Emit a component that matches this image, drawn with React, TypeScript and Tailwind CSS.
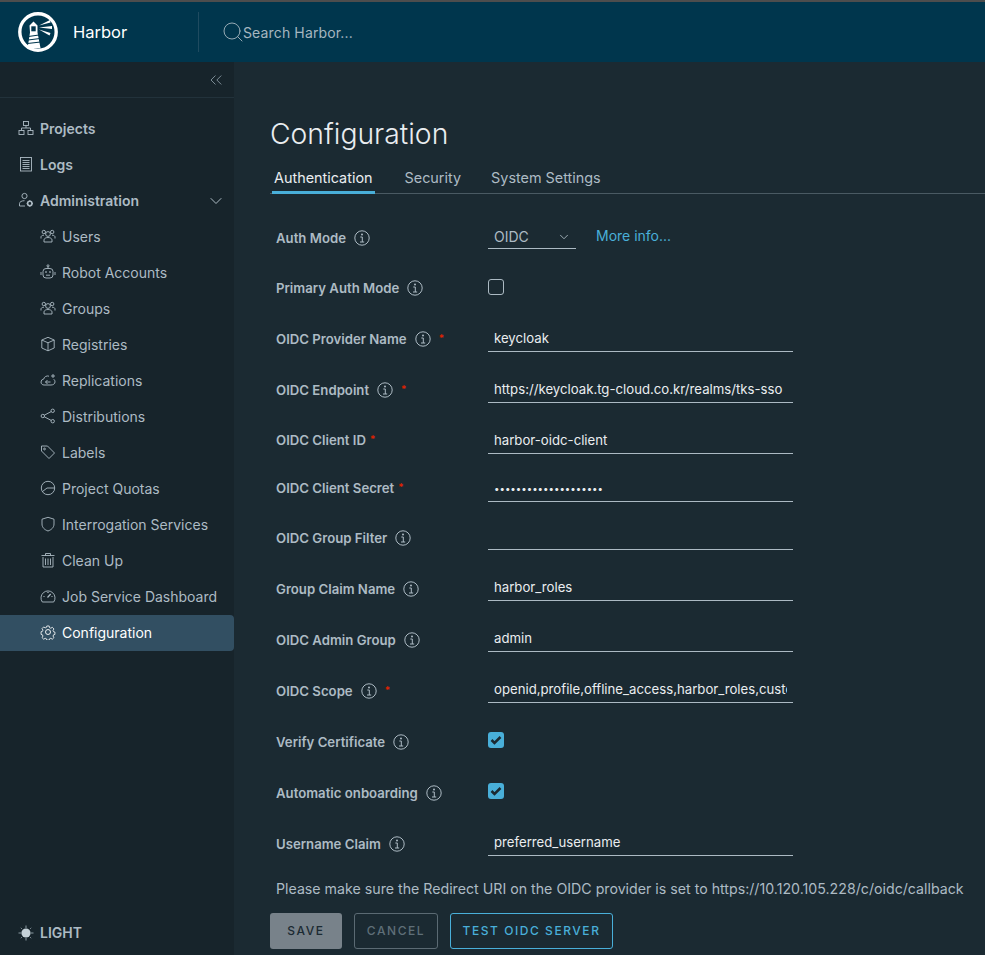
import { ChevronDown, ChevronsLeft, Search } from "lucide-react";
import type { ReactNode } from "react";

const Stroke = ({ children }: { children: ReactNode }) => (
  <svg viewBox="0 0 16 16" fill="none" stroke="currentColor" strokeWidth="0.9" className="size-4 shrink-0">
    {children}
  </svg>
);

const ProjectsIcon = () => (
  <Stroke>
    <rect x="5.5" y="1.5" width="5" height="4" />
    <rect x="1" y="10.5" width="5" height="4" />
    <rect x="10" y="10.5" width="5" height="4" />
    <path d="M8 5.5V8M3.5 10.5V8h9v2.5" />
  </Stroke>
);
const LogsIcon = () => (
  <Stroke>
    <rect x="2.5" y="1.5" width="11" height="13.5" />
    <path d="M4.5 4.5h7M4.5 6.5h7M4.5 8.5h7M4.5 10.5h7M4.5 12.5h7" />
  </Stroke>
);
const AdminIcon = () => (
  <Stroke>
    <circle cx="6.5" cy="4" r="2.6" />
    <path d="M1.5 14v-2.5c0-1.6 2-2.8 5-2.8M1.5 14H7" />
    <circle cx="11.8" cy="11.5" r="2.2" strokeWidth="1.6" />
    <path d="M11.8 8.3v1M11.8 13.7v1M8.7 11.5h1M13.9 11.5h1" strokeWidth="1.2" />
  </Stroke>
);
const UsersIcon = () => (
  <Stroke>
    <circle cx="8" cy="6" r="2.4" />
    <circle cx="3.8" cy="4" r="1.7" />
    <circle cx="12.2" cy="4" r="1.7" />
    <path d="M4 14v-2.2c0-1.2 1.8-2.3 4-2.3s4 1.1 4 2.3V14zM1 10.5V9c0-1 1-1.8 3-1.8M15 10.5V9c0-1-1-1.8-3-1.8" />
  </Stroke>
);
const RobotIcon = () => (
  <Stroke>
    <rect x="3" y="4.5" width="10" height="9.5" rx="3" />
    <circle cx="8" cy="1.8" r="1" />
    <path d="M8 2.8v1.7M1 8v3M15 8v3M6 11.2h4" />
    <circle cx="6" cy="8" r="0.5" />
    <circle cx="10" cy="8" r="0.5" />
  </Stroke>
);
const RegistryIcon = () => (
  <Stroke>
    <path d="M8 1.3 14.2 4v8L8 14.8 1.8 12V4zM1.8 4 8 6.8 14.2 4M8 6.8v8" />
  </Stroke>
);
const ReplicationIcon = () => (
  <Stroke>
    <path d="M9 4.2a4 4 0 0 0-5.3 2.9A3 3 0 0 0 1 10c0 1.8 1.3 3 3 3h7c2 0 4-1 4-3.2 0-1.2-.5-2-1.3-2.6" />
    <path d="M5.5 10h5M7.5 8l-2 2 2 2M13 2v4M11 4h4" />
  </Stroke>
);
const ShareIcon = () => (
  <Stroke>
    <circle cx="12.7" cy="2.8" r="1.7" />
    <circle cx="2.8" cy="8" r="1.7" />
    <circle cx="12.7" cy="13.2" r="1.7" />
    <path d="m4.3 7.2 6.9-3.6M4.3 8.8l6.9 3.6" />
  </Stroke>
);
const TagIcon = () => (
  <Stroke>
    <path d="M1.5 2h6l7 7-5.5 5.5-7.5-7.5z" />
    <circle cx="4.5" cy="5" r="0.9" />
  </Stroke>
);
const QuotaIcon = () => (
  <Stroke>
    <circle cx="8" cy="8" r="6.7" />
    <path d="M2.5 11.5 7 8h7.5" />
  </Stroke>
);
const ShieldIcon = () => (
  <Stroke>
    <path d="M8 1.3 14 3.2V8c0 3.5-2.6 5.8-6 7-3.4-1.2-6-3.5-6-7V3.2z" />
  </Stroke>
);
const TrashIcon = () => (
  <Stroke>
    <path d="M1.5 3.5h13M3 5v10h10V5M5.5 6.5V13M8 6.5V13M10.5 6.5V13M5.5 3.5v-2h5v2" />
  </Stroke>
);
const DashIcon = () => (
  <Stroke>
    <path d="M2.3 14a7 7 0 1 1 11.4 0z" />
    <path d="m7.5 9.5 3.2-3.5M8 4v1M3.5 8.5h1M11.500 8.500h1" strokeWidth="1.2" />
  </Stroke>
);
const GearIcon = () => (
  <Stroke>
    <circle cx="8" cy="8" r="2.5" />
    <path d="M6.7 1.3h2.6l.4 1.9 1.4.6 1.7-1 1.800 1.800-1 1.700.6 1.400 1.500.4v2.600l-1.500.4-.6 1.400 1 1.700-1.800 1.800-1.700-1-1.400.6-.4 1.500H6.700l-.4-1.500-1.400-.6-1.700 1-1.800-1.800 1-1.700-.6-1.400-1.500-.4V7.700l1.500-.4.6-1.400-1-1.700 1.800-1.800 1.700 1 1.400-.6z" transform="translate(.8 .8) scale(.9)" />
  </Stroke>
);
const SunIcon = () => (
  <svg viewBox="0 0 16 16" className="size-4 shrink-0">
    <circle cx="8" cy="8" r="4.6" fill="#c5d1d8" />
    <path d="M8 .5V3M8 13v2.5M.5 8H3M13 8h2.5M2.8 2.8l1 1M12.2 12.2l1 1M2.8 13.2l1-1M12.2 3.8l1-1" stroke="#8b9aa3" strokeWidth="1" />
  </svg>
);
const InfoIcon = () => (
  <svg viewBox="0 0 16 16" fill="none" stroke="#adbbc4" className="size-4 shrink-0">
    <circle cx="8" cy="8" r="7.2" strokeWidth="1" />
    <circle cx="8" cy="4.6" r="1" fill="#adbbc4" stroke="none" />
    <path d="M6.3 7h2v5M6 12h4.2" strokeWidth="1" />
  </svg>
);
const CheckIcon = () => (
  <svg viewBox="0 0 16 16" fill="none" stroke="#1b2a32" strokeWidth="2.5" className="size-4">
    <path d="m3.5 8 3 3 6-6" />
  </svg>
);

const HarborLogo = () => (
  <svg viewBox="0 0 40 40" className="size-10 shrink-0">
    <circle cx="20" cy="20" r="18.2" fill="none" stroke="#fff" strokeWidth="3.4" />
    <path d="M11.5 13.5 15.5 9.500l4 4v7l3 15.500-13 .5 2.500-16z" fill="#fff" />
    <rect x="13.3" y="14.3" width="4.4" height="5" fill="#00364d" />
    <path d="M10.5 24.5 21 23M10 28l12-1.500M9.500 31.500l13-1.500" stroke="#00364d" strokeWidth="1.2" />
    <path d="m21 13.500 11-5.500.5 2.500zM21 15.500l13-1.500v3zM21 17.500l11.500 3.500-1 2.500z" fill="#fff" />
  </svg>
);

type NavEntry = { label: string; icon: ReactNode; active?: boolean };

const topNav: NavEntry[] = [
  { label: "Projects", icon: <ProjectsIcon /> },
  { label: "Logs", icon: <LogsIcon /> },
];

const adminNav: NavEntry[] = [
  { label: "Users", icon: <UsersIcon /> },
  { label: "Robot Accounts", icon: <RobotIcon /> },
  { label: "Groups", icon: <UsersIcon /> },
  { label: "Registries", icon: <RegistryIcon /> },
  { label: "Replications", icon: <ReplicationIcon /> },
  { label: "Distributions", icon: <ShareIcon /> },
  { label: "Labels", icon: <TagIcon /> },
  { label: "Project Quotas", icon: <QuotaIcon /> },
  { label: "Interrogation Services", icon: <ShieldIcon /> },
  { label: "Clean Up", icon: <TrashIcon /> },
  { label: "Job Service Dashboard", icon: <DashIcon /> },
  { label: "Configuration", icon: <GearIcon />, active: true },
];

const TopItem = ({ item }: { item: NavEntry }) => (
  <div className="flex h-9 items-center gap-[6px] pb-[2px] pl-[18px] text-[14px] font-semibold text-[#adbbc4]">
    {item.icon}
    <span>{item.label}</span>
  </div>
);

const SubItem = ({ item }: { item: NavEntry }) => (
  <div
    className={
      item.active
        ? "flex h-9 items-center gap-[6px] rounded-r-[4px] bg-[#324f62] pb-[2px] pl-10 text-[14px] text-white"
        : "flex h-9 items-center gap-[6px] pb-[2px] pl-10 text-[14px] text-[#adbbc4]"
    }
  >
    {item.icon}
    <span>{item.label}</span>
  </div>
);

const Sidebar = () => (
  <aside className="flex w-[234px] shrink-0 flex-col bg-[#17242b]">
    <div className="flex h-9 items-center justify-end border-b border-[#22323b] pr-[8px] text-[#8fa0aa]">
      <ChevronsLeft className="size-5" strokeWidth={1} />
    </div>
    <nav className="mt-[13px]">
      {topNav.map((item) => (
        <TopItem key={item.label} item={item} />
      ))}
      <div className="flex h-9 items-center justify-between pr-[8px] text-[#adbbc4]">
        <TopItem item={{ label: "Administration", icon: <AdminIcon /> }} />
        <ChevronDown className="size-5" strokeWidth={1.2} />
      </div>
      {adminNav.map((item) => (
        <SubItem key={item.label} item={item} />
      ))}
    </nav>
    <div className="mt-auto mb-[12px] flex items-center gap-[6px] pl-[18px] text-[14px] font-semibold text-[#adbbc4]">
      <SunIcon />
      <span>LIGHT</span>
    </div>
  </aside>
);

type Row = {
  label: string;
  info?: boolean;
  required?: boolean;
  raised?: boolean;
  value?: string;
  kind?: "input" | "secret" | "select" | "off" | "on";
  top: string;
};

const rows: Row[] = [
  { label: "Auth Mode", info: true, raised: true, kind: "select", top: "mt-[33px]" },
  { label: "Primary Auth Mode", info: true, raised: true, kind: "off", top: "mt-[26px]" },
  { label: "OIDC Provider Name", info: true, raised: true, required: true, value: "keycloak", top: "mt-[27px]" },
  { label: "OIDC Endpoint", info: true, raised: true, required: true, value: "https://keycloak.tg-cloud.co.kr/realms/tks-sso", top: "mt-[27px]" },
  { label: "OIDC Client ID", required: true, value: "harbor-oidc-client", top: "mt-[27px]" },
  { label: "OIDC Client Secret", required: true, kind: "secret", value: "••••••••••••••••••••", top: "mt-[24px]" },
  { label: "OIDC Group Filter", info: true, value: "", top: "mt-[24px]" },
  { label: "Group Claim Name", info: true, value: "harbor_roles", top: "mt-[27px]" },
  { label: "OIDC Admin Group", info: true, value: "admin", top: "mt-[27px]" },
  { label: "OIDC Scope", info: true, required: true, value: "openid,profile,offline_access,harbor_roles,custom", top: "mt-[27px]" },
  { label: "Verify Certificate", info: true, kind: "on", top: "mt-[27px]" },
  { label: "Automatic onboarding", info: true, kind: "on", top: "mt-[27px]" },
  { label: "Username Claim", info: true, value: "preferred_username", top: "mt-[27px]" },
];

const Control = ({ row }: { row: Row }) => {
  if (row.kind === "select") {
    return (
      <div className="flex items-start gap-5">
        <div className="flex h-[22px] w-[88px] items-center justify-between border-b border-[#acbac3] pr-[5px] pb-[2px] pl-[6px] text-[14px] leading-[20px] text-[#adbbc4]">
          <span>OIDC</span>
          <ChevronDown className="size-[14px]" strokeWidth={1.5} />
        </div>
        <span className="-mt-[2px] text-[14px] text-[#49afd9]">More info...</span>
      </div>
    );
  }
  if (row.kind === "off") {
    return <div className="mt-[2px] size-4 rounded-[3px] border border-[#acbac3]" />;
  }
  if (row.kind === "on") {
    return (
      <div className="mt-[2px] flex size-4 items-center justify-center rounded-[3px] bg-[#49afd9]">
        <CheckIcon />
      </div>
    );
  }
  return (
    <div className="h-[24px] w-[305px] border-b border-[#acbac3] px-[6px]">
      <div
        className={
          row.kind === "secret"
            ? "overflow-hidden text-[9.7px] leading-[22px] whitespace-nowrap text-[#eaedf0]"
            : "overflow-hidden text-[13.2px] leading-[20px] whitespace-nowrap text-[#eaedf0]"
        }
      >
        {row.value}
      </div>
    </div>
  );
};

const labelOffset = (row: Row) => {
  if (!row.info) return "-mt-[2px]";
  return row.raised ? "-mt-px" : "";
};

const FormRow = ({ row }: { row: Row }) => (
  <div className={`${row.top} flex h-[24px] items-start`}>
    <div className={`${labelOffset(row)} flex w-[218px] shrink-0 items-center pl-[6px] text-[13.2px] leading-[24px] font-semibold text-[#adbbc4]`}>
      <span>{row.label}</span>
      {row.info && (
        <span className="ml-2">
          <InfoIcon />
        </span>
      )}
      {row.required && (
        <span className={row.info ? "-mt-[3px] ml-2 text-[10px] text-[#e12200]" : "-mt-[3px] ml-1 text-[10px] text-[#e12200]"}>*</span>
      )}
    </div>
    <Control row={row} />
  </div>
);

export default function App() {
  return (
    <div className="flex h-[955px] w-[985px] flex-col overflow-hidden bg-[#1b2a32] font-['Inter',sans-serif]">
      <div className="h-[2px] bg-[#4d4d4d]" />
      <header className="flex h-[60px] shrink-0 items-center bg-[#00364d]">
        <div className="flex w-[199px] items-center gap-[15px] border-r border-[#1f4b60] pl-[18px]">
          <HarborLogo />
          <span className="mt-[1px] text-[16.5px] text-white">Harbor</span>
        </div>
        <div className="mt-[1px] ml-[22px] flex items-center text-[14px] text-[#a6b7c0]">
          <Search className="-mt-[1px] size-6" strokeWidth={0.9} />
          <span className="-ml-[2px] tracking-[0.01em]">Search Harbor...</span>
        </div>
      </header>
      <div className="flex min-h-0 flex-1">
        <Sidebar />
        <main className="min-w-0 flex-1 pl-[36px]">
          <h1 className="mt-[54px] text-[28.3px] leading-9 font-light text-[#eaedf0]">Configuration</h1>
          <div className="mt-[13px] flex h-[29px] items-start gap-[30px] border-b border-[#4a5a63] text-[14.4px]">
            <div className="ml-[2px] h-[29px] border-b-[3px] border-[#49afd9] px-[2px] leading-[25px] text-[#eaedf0]">Authentication</div>
            <div className="leading-[25px] text-[#adbbc4]">Security</div>
            <div className="leading-[25px] text-[#adbbc4]">System Settings</div>
          </div>
          {rows.map((row) => (
            <FormRow key={row.label} row={row} />
          ))}
          <p className="mt-[23px] pl-[6px] text-[14.2px] leading-5 whitespace-nowrap text-[#adbbc4]">
            Please make sure the Redirect URI on the OIDC provider is set to https://10.120.105.228/c/oidc/callback
          </p>
          <div className="mt-[14px] flex gap-3 text-[12px] font-medium tracking-[0.13em]">
            <button className="h-[36px] w-[72px] rounded-[3px] bg-[#78828a] text-[#1b2a32]">SAVE</button>
            <button className="h-[36px] w-[84px] rounded-[3px] border border-[#5b6a73] text-[#5f6f78]">CANCEL</button>
            <button className="h-[36px] w-[163px] rounded-[3px] border border-[#49afd9] text-[#49afd9]">TEST OIDC SERVER</button>
          </div>
        </main>
      </div>
    </div>
  );
}
